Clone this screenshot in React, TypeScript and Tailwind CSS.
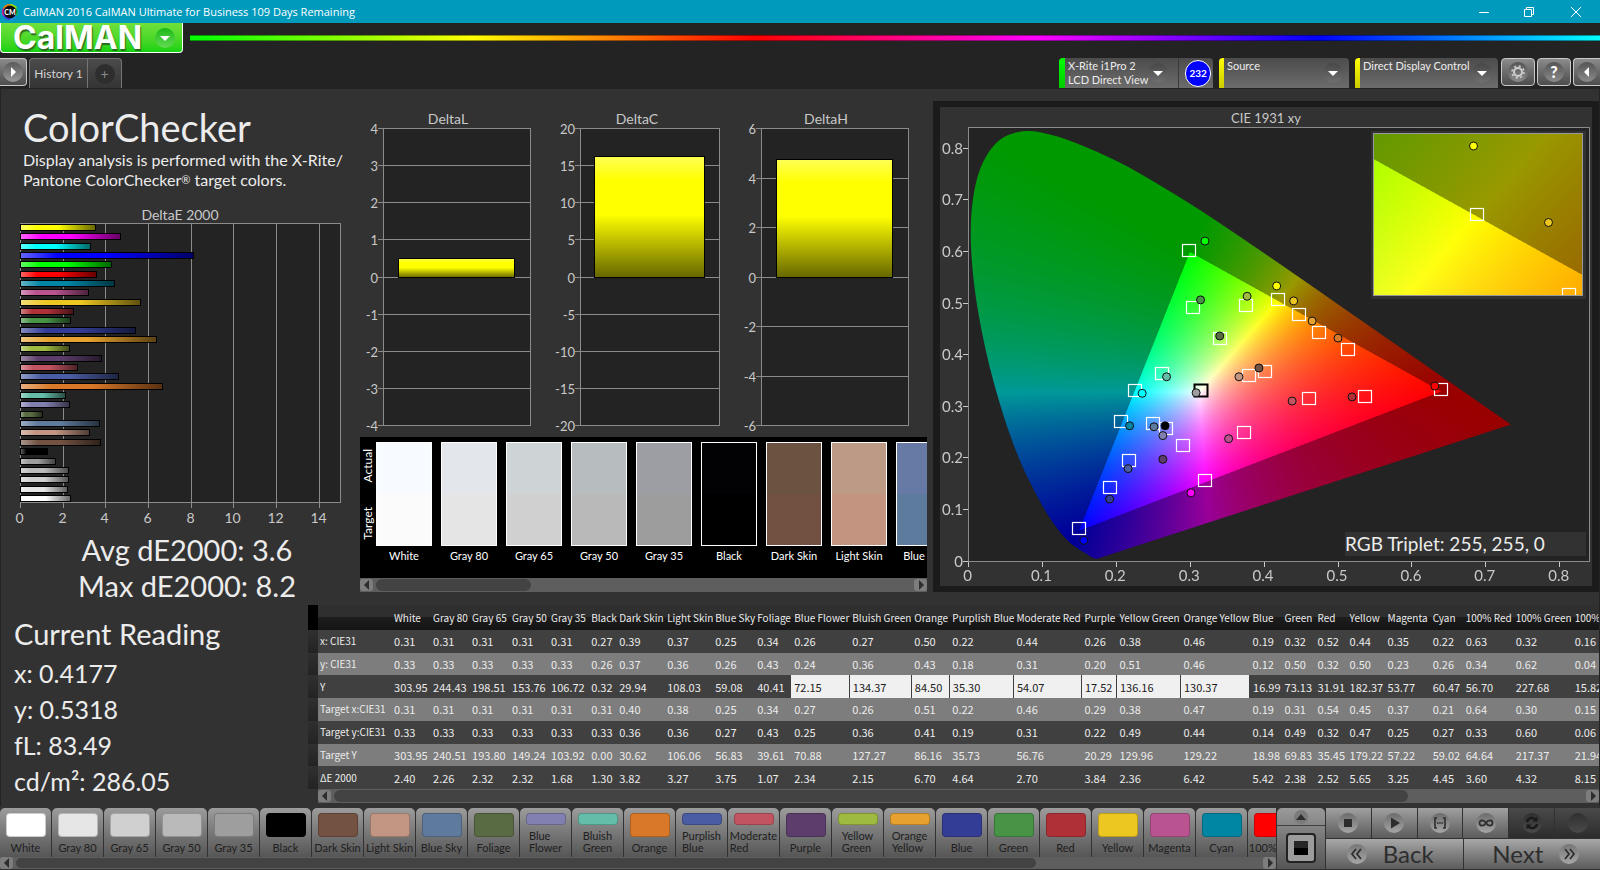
import React, { useLayoutEffect, useRef } from 'react';

interface Patch {
  name: string;
  color: string;
  deltaE: number;
}

const patches: Patch[] = [
  { name: 'White', color: '#ffffff', deltaE: 2.4 },
  { name: 'Gray 80', color: '#e6e6e6', deltaE: 2.26 },
  { name: 'Gray 65', color: '#d0d0d0', deltaE: 2.32 },
  { name: 'Gray 50', color: '#bababa', deltaE: 2.32 },
  { name: 'Gray 35', color: '#9e9e9e', deltaE: 1.68 },
  { name: 'Black', color: '#000000', deltaE: 1.3 },
  { name: 'Dark Skin', color: '#735242', deltaE: 3.82 },
  { name: 'Light Skin', color: '#c29682', deltaE: 3.27 },
  { name: 'Blue Sky', color: '#5e7a9c', deltaE: 3.75 },
  { name: 'Foliage', color: '#596b42', deltaE: 1.07 },
  { name: 'Blue Flower', color: '#8280b0', deltaE: 2.34 },
  { name: 'Bluish Green', color: '#63bda8', deltaE: 2.15 },
  { name: 'Orange', color: '#d97829', deltaE: 6.7 },
  { name: 'Purplish Blue', color: '#4a5ca3', deltaE: 4.64 },
  { name: 'Moderate Red', color: '#c25461', deltaE: 2.7 },
  { name: 'Purple', color: '#5c3d6b', deltaE: 3.84 },
  { name: 'Yellow Green', color: '#9eba40', deltaE: 2.36 },
  { name: 'Orange Yellow', color: '#e6a12e', deltaE: 6.42 },
  { name: 'Blue', color: '#333d96', deltaE: 5.42 },
  { name: 'Green', color: '#479447', deltaE: 2.38 },
  { name: 'Red', color: '#b03038', deltaE: 2.52 },
  { name: 'Yellow', color: '#edc721', deltaE: 5.65 },
  { name: 'Magenta', color: '#ba5491', deltaE: 3.25 },
  { name: 'Cyan', color: '#0085a3', deltaE: 4.45 },
  { name: '100% Red', color: '#ff0000', deltaE: 3.6 },
  { name: '100% Green', color: '#00ff00', deltaE: 4.32 },
  { name: '100% Blue', color: '#0000ff', deltaE: 8.15 },
  { name: '100% Cyan', color: '#00ffff', deltaE: 3.35 },
  { name: '100% Magenta', color: '#ff00ff', deltaE: 4.72 },
  { name: '100% Yellow', color: '#ffff00', deltaE: 3.56 },
];

const columnWidths = [
  39, 39, 40, 39, 40, 28, 48, 48, 42, 37, 58, 62, 38, 64, 68, 35, 64, 69, 32, 33, 32, 38, 45, 33, 50, 59, 60,
];

const tableRows: { label: string; values: string }[] = [
  { label: 'x: CIE31', values: '0.31 0.31 0.31 0.31 0.31 0.27 0.39 0.37 0.25 0.34 0.26 0.27 0.50 0.22 0.44 0.26 0.38 0.46 0.19 0.32 0.52 0.44 0.35 0.22 0.63 0.32 0.16' },
  { label: 'y: CIE31', values: '0.33 0.33 0.33 0.33 0.33 0.26 0.37 0.36 0.26 0.43 0.24 0.36 0.43 0.18 0.31 0.20 0.51 0.46 0.12 0.50 0.32 0.50 0.23 0.26 0.34 0.62 0.04' },
  { label: 'Y', values: '303.95 244.43 198.51 153.76 106.72 0.32 29.94 108.03 59.08 40.41 72.15 134.37 84.50 35.30 54.07 17.52 136.16 130.37 16.99 73.13 31.91 182.37 53.77 60.47 56.70 227.68 15.82' },
  { label: 'Target x:CIE31', values: '0.31 0.31 0.31 0.31 0.31 0.31 0.40 0.38 0.25 0.34 0.27 0.26 0.51 0.22 0.46 0.29 0.38 0.47 0.19 0.31 0.54 0.45 0.37 0.21 0.64 0.30 0.15' },
  { label: 'Target y:CIE31', values: '0.33 0.33 0.33 0.33 0.33 0.33 0.36 0.36 0.27 0.43 0.25 0.36 0.41 0.19 0.31 0.22 0.49 0.44 0.14 0.49 0.32 0.47 0.25 0.27 0.33 0.60 0.06' },
  { label: 'Target Y', values: '303.95 240.51 193.80 149.24 103.92 0.00 30.62 106.06 56.83 39.61 70.88 127.27 86.16 35.73 56.76 20.29 129.96 129.22 18.98 69.83 35.45 179.22 57.22 59.02 64.64 217.37 21.94' },
  { label: 'ΔE 2000', values: '2.40 2.26 2.32 2.32 1.68 1.30 3.82 3.27 3.75 1.07 2.34 2.15 6.70 4.64 2.70 3.84 2.36 6.42 5.42 2.38 2.52 5.65 3.25 4.45 3.60 4.32 8.15' },
];

const swatches = [
  { name: 'White', actual: '#f7fbff', target: '#fbfbfb' },
  { name: 'Gray 80', actual: '#e3e7ec', target: '#e5e5e5' },
  { name: 'Gray 65', actual: '#ced3d6', target: '#d0d0d0' },
  { name: 'Gray 50', actual: '#b7bcbf', target: '#b9b9b9' },
  { name: 'Gray 35', actual: '#9d9ea3', target: '#9d9d9d' },
  { name: 'Black', actual: '#020205', target: '#000000' },
  { name: 'Dark Skin', actual: '#6c5240', target: '#725142' },
  { name: 'Light Skin', actual: '#bc9a86', target: '#c39581' },
  { name: 'Blue Sky', actual: '#667aa5', target: '#5d7b9d' },
];

// CIE 1931 spectral locus
const locus: [number, number][] = [
  [0.1741, 0.005], [0.1689, 0.0069], [0.1644, 0.0109], [0.1566, 0.0177], [0.144, 0.0297], [0.1355, 0.0399],
  [0.1241, 0.0578], [0.1096, 0.0868], [0.0913, 0.1327], [0.0687, 0.2007], [0.0454, 0.295], [0.0235, 0.4127],
  [0.0082, 0.5384], [0.0039, 0.6548], [0.0139, 0.7502], [0.0389, 0.812], [0.0743, 0.8338], [0.1142, 0.8262],
  [0.1547, 0.8059], [0.1929, 0.7816], [0.2296, 0.7543], [0.3016, 0.6923], [0.3731, 0.6245], [0.4441, 0.5547],
  [0.5125, 0.4866], [0.5752, 0.4242], [0.627, 0.3725], [0.6658, 0.334], [0.6915, 0.3083], [0.719, 0.2809],
  [0.7347, 0.2653],
];

const targets: [number, number][] = [
  [0.299, 0.602], [0.304, 0.492], [0.375, 0.496], [0.34, 0.431], [0.262, 0.363], [0.225, 0.33], [0.207, 0.271],
  [0.249, 0.267], [0.267, 0.256], [0.29, 0.223], [0.217, 0.194], [0.191, 0.142], [0.149, 0.063], [0.32, 0.156],
  [0.373, 0.249], [0.379, 0.359], [0.419, 0.507], [0.447, 0.477], [0.474, 0.443], [0.513, 0.41], [0.401, 0.368],
  [0.461, 0.315], [0.537, 0.318], [0.64, 0.333],
];

const readings: [number, number, string][] = [
  [0.32, 0.621, '#00ff00'], [0.314, 0.507, '#479447'], [0.377, 0.514, '#9eba40'], [0.34, 0.437, '#596b42'],
  [0.268, 0.358, '#63bda8'], [0.235, 0.326, '#00ffff'], [0.218, 0.263, '#0085a3'], [0.251, 0.261, '#5e7a9c'],
  [0.266, 0.263, '#000000'], [0.263, 0.244, '#8280b0'], [0.263, 0.198, '#5c3d6b'], [0.216, 0.18, '#4a5ca3'],
  [0.191, 0.121, '#333d96'], [0.156, 0.041, '#0000ff'], [0.301, 0.133, '#ff00ff'], [0.352, 0.238, '#ba5491'],
  [0.366, 0.358, '#c29682'], [0.393, 0.375, '#735242'], [0.308, 0.327, '#9e9e9e'], [0.417, 0.534, '#ffff00'],
  [0.44, 0.505, '#edc721'], [0.465, 0.466, '#e6a12e'], [0.5, 0.433, '#d97829'], [0.519, 0.319, '#b03038'],
  [0.438, 0.311, '#c25461'], [0.631, 0.34, '#ff0000'],
];

const SCALE_X = 739;
const SCALE_Y = 516;

export default function App() {
  return (
    <div className="min-h-screen flex flex-col overflow-hidden bg-[#232323] text-[#ececec] font-[Lato,sans-serif] select-none">
      <TitleBar />
      <Header />
      <main className="flex-1 flex flex-col bg-[#323232] mx-px">
        <div className="grid grid-cols-[350fr_580fr_668fr]">
          <section className="min-w-0 pt-[18px] pb-px">
            <h1 className="pl-[22px] text-[38px] leading-[40px]">ColorChecker</h1>
            <p className="pl-[22px] mt-[3px] text-[16px] leading-5 whitespace-nowrap">
              Display analysis is performed with the X-Rite/
              <br />
              Pantone ColorChecker<span className="text-[11px] align-top">®</span> target colors.
            </p>
            <DeltaEChart />
            <div className="pl-[22px] text-[29px] leading-9 text-center">
              <p>Avg dE2000: 3.6</p>
              <p>Max dE2000: 8.2</p>
            </div>
          </section>

          <section className="min-w-0 pl-[9px] pr-1 pt-[21px]">
            <div className="grid grid-cols-3 gap-[13px] pr-[13px]">
              <DeltaChart title="DeltaL" max={4} step={1} value={0.5} gutter={23} />
              <DeltaChart title="DeltaC" max={20} step={5} value={16.2} gutter={31} />
              <DeltaChart title="DeltaH" max={6} step={2} value={4.75} gutter={23} />
            </div>
            <SwatchStrip />
          </section>

          <section className="min-w-0 pt-3 pl-[2px]">
            <div className="bg-[#1b1b1b] py-[6px] px-[7px]">
              <div className="bg-[#323232]">
                <CieChart />
              </div>
            </div>
          </section>
        </div>

        <div className="flex-1 flex">
          <section className="w-[307px] shrink-0 pl-[13px] pt-[11px]">
            <h2 className="text-[29px] leading-9">Current Reading</h2>
            <div className="mt-[3px] text-[25px] leading-9">
              <p>x: 0.4177</p>
              <p>y: 0.5318</p>
              <p>fL: 83.49</p>
              <p>cd/m²: 286.05</p>
            </div>
          </section>
          <ReadingTable />
        </div>
      </main>
      <BottomBar />
    </div>
  );
}

function TitleBar() {
  return (
    <div className="h-[23px] flex items-center bg-[#009abd] text-white">
      <svg className="w-4 h-4 ml-[2px]" viewBox="0 0 16 16">
        <path d="M8 8L8 0A8 8 0 0 1 15 4Z" fill="#a0e000" />
        <path d="M8 8L15 4A8 8 0 0 1 15 12Z" fill="#00c060" />
        <path d="M8 8L15 12A8 8 0 0 1 8 16Z" fill="#2090f0" />
        <path d="M8 8L8 16A8 8 0 0 1 1 12Z" fill="#4040e0" />
        <path d="M8 8L1 12A8 8 0 0 1 1 4Z" fill="#d020a0" />
        <path d="M8 8L1 4A8 8 0 0 1 8 0Z" fill="#f08000" />
        <circle cx="8" cy="8" r="6.5" fill="#0b0b14" />
        <text x="8" y="10.5" textAnchor="middle" fontSize="7" fontWeight="900" fill="#fff">CM</text>
      </svg>
      <span className="ml-[5px] text-[11px] leading-4 font-['Open_Sans',sans-serif]">
        CalMAN 2016 CalMAN Ultimate for Business 109 Days Remaining
      </span>
      <div className="ml-auto flex">
        <button aria-label="Minimize" className="w-[45px] h-[23px] flex items-center justify-center">
          <svg className="w-[10px] h-[10px]" viewBox="0 0 10 10" stroke="#fff"><path d="M0 5.5H10" /></svg>
        </button>
        <button aria-label="Restore" className="w-[45px] h-[23px] flex items-center justify-center">
          <svg className="w-[10px] h-[10px]" viewBox="0 0 10 10" stroke="#fff" fill="none">
            <path d="M.5 2.5H7.5V9.5H.5ZM2.5 2.5V.5H9.5V7.5H7.5" />
          </svg>
        </button>
        <button aria-label="Close" className="w-[49px] h-[23px] flex items-center justify-center">
          <svg className="w-[10px] h-[10px]" viewBox="0 0 10 10" stroke="#fff"><path d="M0 0L10 10M10 0L0 10" /></svg>
        </button>
      </div>
    </div>
  );
}

function Header() {
  return (
    <header>
      <div className="h-[35px] flex items-start">
        <button className="w-[183px] h-[30px] flex items-center justify-between pl-3 pr-[7px] rounded-b-[4px] border border-t-0 border-white bg-linear-to-b from-[#6fe03c] to-[#0fd210] text-white">
          <span className="text-[32px] leading-[28px] font-bold font-[Inter,sans-serif] [text-shadow:1px_2px_1px_#2a6a20]">CalMAN</span>
          <span className="w-5 h-5 rounded-full flex items-center justify-center bg-linear-to-b from-[#14b814] to-[#5fdc50]">
            <Triangle direction="down" />
          </span>
        </button>
        <div className="flex-1 h-[6px] mt-3 ml-[7px] border-y border-black/40 bg-[linear-gradient(to_right,#0f0,#ff0,#f00,#f0f,#00f,#0ff)]" />
      </div>

      <div className="h-[31px] flex items-start">
        <button aria-label="Open panel" className="w-[27px] h-7 flex items-center justify-center rounded-r-[4px] border border-l-0 border-[#c9c9c9] bg-linear-to-b from-[#8b8b8b] to-[#4d4d4d]">
          <span className="w-5 h-5 rounded-full flex items-center justify-center bg-linear-to-b from-[#5a5a5a] to-[#9b9b9b]">
            <Triangle direction="right" />
          </span>
        </button>
        <div className="ml-[2px] flex h-[30px] rounded-t-[4px] border border-b-0 border-[#757575] bg-linear-to-b from-[#4b4b4b] to-[#343434]">
          <button className="w-[58px] text-[12px] text-[#d4d4d4] border-r border-[#757575]">History 1</button>
          <button aria-label="Add history" className="w-[33px] flex items-center justify-center">
            <span className="w-5 h-5 rounded-full bg-[#2e2e2e] text-[#8a8a8a] text-[14px] leading-5">+</span>
          </button>
        </div>

        <div className="ml-auto flex items-start">
          <div className="flex h-[30px] w-[154px] mr-[6px] rounded-t-[4px] overflow-hidden bg-linear-to-b from-[#4c4c4c] to-[#6c6c6c]">
            <button className="flex-1 flex pr-1 border-r border-[#3a3a3a] text-left">
              <span className="w-[6px] self-stretch bg-linear-to-b from-[#00ff00] to-[#00cc00]" />
              <span className="pl-[3px] flex-1 text-[11px] leading-[14px] pt-px whitespace-nowrap">
                X-Rite i1Pro 2
                <br />
                LCD Direct View
              </span>
              <DropCircle />
            </button>
            <span className="w-[27px] h-[27px] ml-[6px] mr-[2px] mt-[2px] flex items-center justify-center rounded-full border border-white bg-[#0000ff] text-white text-[10px] font-bold">232</span>
          </div>
          <button className="flex h-[30px] w-[130px] mr-[6px] rounded-t-[4px] overflow-hidden text-left bg-linear-to-b from-[#4c4c4c] to-[#6c6c6c]">
            <span className="w-[5px] self-stretch bg-linear-to-b from-[#ffff00] to-[#cccc00]" />
            <span className="pl-[3px] flex-1 text-[11px] leading-[14px] pt-px">Source</span>
            <DropCircle />
          </button>
          <button className="flex h-[30px] w-[143px] mr-[3px] rounded-t-[4px] overflow-hidden text-left bg-linear-to-b from-[#4c4c4c] to-[#6c6c6c]">
            <span className="w-[5px] self-stretch bg-linear-to-b from-[#ffff00] to-[#cccc00]" />
            <span className="pl-[3px] flex-1 text-[11px] leading-[14px] pt-px whitespace-nowrap">Direct Display Control</span>
            <DropCircle />
          </button>
          <HeaderButton label="Settings">
            <svg className="w-[14px] h-[14px]" viewBox="0 0 14 14" fill="none" stroke="#d0d0d0">
              <circle cx="7" cy="7" r="4" strokeWidth="2" />
              <circle cx="7" cy="7" r="6" strokeWidth="1.5" strokeDasharray="2.2 2.51" />
            </svg>
          </HeaderButton>
          <HeaderButton label="Help">
            <span className="text-[16px] leading-5 font-black text-white">?</span>
          </HeaderButton>
          <button aria-label="Collapse" className="w-[27px] h-7 flex items-center justify-center rounded-l-[4px] border border-r-0 border-[#c9c9c9] bg-linear-to-b from-[#8b8b8b] to-[#4d4d4d]">
            <span className="w-5 h-5 rounded-full flex items-center justify-center bg-linear-to-b from-[#555] to-[#8b8b8b]">
              <Triangle direction="left" />
            </span>
          </button>
        </div>
      </div>
    </header>
  );
}

function HeaderButton({ label, children }: { label: string; children: React.ReactNode }) {
  return (
    <button aria-label={label} className="w-[34px] h-7 mr-[2px] flex items-center justify-center rounded-[4px] border border-[#c9c9c9] bg-linear-to-b from-[#8b8b8b] to-[#4d4d4d]">
      <span className="w-5 h-5 rounded-full flex items-center justify-center bg-linear-to-b from-[#555] to-[#8b8b8b]">{children}</span>
    </button>
  );
}

function DropCircle() {
  return (
    <span className="w-5 h-5 mt-[5px] mr-[6px] shrink-0 rounded-full flex items-center justify-center bg-linear-to-b from-[#474747] to-[#707070]">
      <Triangle direction="down" />
    </span>
  );
}

function Triangle({ direction, dark }: { direction: 'up' | 'down' | 'left' | 'right'; dark?: boolean }) {
  const points = {
    up: '0,8 5,2 10,8',
    down: '0,3 10,3 5,8',
    left: '7,0 7,10 2,5',
    right: '3,0 3,10 8,5',
  };
  return (
    <svg className="w-[10px] h-[10px]" viewBox="0 0 10 10">
      <polygon points={points[direction]} fill={dark ? '#2d2d2d' : '#ffffff'} />
    </svg>
  );
}

function DeltaEChart() {
  const bars = [...patches].reverse();
  const unit = 320 / 15;
  return (
    <svg className="block w-full mt-3" viewBox="0 0 350 330" fontSize="14" fill="#c9c9c9">
      <defs>
        <linearGradient id="shadeX">
          <stop offset="0" stopColor="#fff" stopOpacity=".4" />
          <stop offset=".22" stopColor="#fff" stopOpacity="0" />
          <stop offset=".5" stopColor="#000" stopOpacity="0" />
          <stop offset="1" stopColor="#000" stopOpacity=".6" />
        </linearGradient>
      </defs>
      <text x="179" y="18" textAnchor="middle">DeltaE 2000</text>
      <rect x="19.5" y="21.5" width="320" height="279" fill="#232323" stroke="#8b8b8b" />
      {[0, 2, 4, 6, 8, 10, 12, 14].map((tick) => {
        const x = Math.round(19 + tick * unit) + 0.5;
        return (
          <g key={tick}>
            <path d={`M${x} 21V306`} stroke="#8b8b8b" />
            <text x={x - 1} y="321" textAnchor="middle">{tick}</text>
          </g>
        );
      })}
      {bars.map((bar, i) => {
        const y = Math.round(22 + i * 9.34) + 0.5;
        const width = Math.round(bar.deltaE * unit) - 1;
        return (
          <g key={bar.name}>
            <rect x="19.5" y={y} width={width} height="6" fill={bar.color} />
            <rect x="19.5" y={y} width={width} height="6" fill="url(#shadeX)" stroke="#000" />
          </g>
        );
      })}
    </svg>
  );
}

interface DeltaChartProps {
  title: string;
  max: number;
  step: number;
  value: number;
  gutter: number;
}

function DeltaChart({ title, max, step, value, gutter }: DeltaChartProps) {
  const top = 18.5;
  const height = 297;
  const width = 170 - gutter;
  const toY = (v: number) => Math.floor(top + ((max - v) / (2 * max)) * height) + 0.5;
  const ticks: number[] = [];
  for (let t = max; t >= -max; t -= step) ticks.push(t);
  const gradient = `shade${title}`;
  return (
    <svg className="block w-full" viewBox="0 0 176 327" fontSize="13" fill="#c9c9c9">
      <defs>
        <linearGradient id={gradient} x2="0" y2="1">
          <stop offset="0" stopColor="#ffff55" />
          <stop offset=".2" stopColor="#ffff00" />
          <stop offset=".48" stopColor="#ffff00" />
          <stop offset="1" stopColor="#666600" />
        </linearGradient>
      </defs>
      <text x="88" y="14" fontSize="14" textAnchor="middle">{title}</text>
      <rect x={gutter + 0.5} y={top} width={width} height={height} fill="#232323" stroke="#8b8b8b" />
      {ticks.map((tick) => (
        <g key={tick}>
          <path d={`M${gutter - 5} ${toY(tick)}H${gutter + width}`} stroke="#8b8b8b" />
          <text x={gutter - 5} y={toY(tick) + 5} textAnchor="end">{tick}</text>
        </g>
      ))}
      <rect
        x={Math.round(gutter + width * 0.1) + 0.5}
        y={toY(value)}
        width={Math.round(width * 0.79)}
        height={toY(0) - toY(value)}
        fill={`url(#${gradient})`}
        stroke="#000"
      />
    </svg>
  );
}

function SwatchStrip() {
  return (
    <div>
      <div className="h-[141px] flex overflow-hidden bg-black text-white">
        <div className="w-4 shrink-0 h-[109px] pt-3 pb-[6px] flex flex-col justify-between items-center text-[12px] leading-4">
          <span className="[writing-mode:vertical-rl] rotate-180">Actual</span>
          <span className="[writing-mode:vertical-rl] rotate-180">Target</span>
        </div>
        {swatches.map((swatch) => (
          <div key={swatch.name} className="w-14 mr-[9px] pt-[5px] shrink-0">
            <div className="h-[104px] flex flex-col border border-white">
              <div className="flex-1" style={{ backgroundColor: swatch.actual }} />
              <div className="flex-1" style={{ backgroundColor: swatch.target }} />
            </div>
            <p className="text-[11px] leading-5 text-center whitespace-nowrap">{swatch.name}</p>
          </div>
        ))}
      </div>
      <ScrollBar thumb="w-[29%]" />
    </div>
  );
}

function ScrollBar({ thumb, thin }: { thumb: string; thin?: boolean }) {
  return (
    <div className={`flex items-center bg-[#5e5e5e] ${thin ? 'h-3' : 'h-[14px]'}`}>
      <button aria-label="Scroll left" className="w-[13px] h-3 shrink-0 flex items-center justify-center rounded-[3px] bg-[#7d7d7d]">
        <Triangle direction="left" dark />
      </button>
      <div className="flex-1 mx-[3px] self-stretch py-px">
        <div className={`h-full rounded-full bg-[#434343] ${thumb}`} />
      </div>
      <button aria-label="Scroll right" className="w-[13px] h-3 shrink-0 flex items-center justify-center rounded-[3px] bg-[#7d7d7d]">
        <Triangle direction="right" dark />
      </button>
    </div>
  );
}

interface GamutProps {
  width: number;
  height: number;
  left: number;
  top: number;
  zoom: number;
}

// Fills the horseshoe with chromaticity colours, dimmed outside the sRGB triangle
function GamutCanvas({ width, height, left, top, zoom }: GamutProps) {
  const ref = useRef<HTMLCanvasElement>(null);
  // twice the display size, so that the triangle's edges come out smooth
  const w = width * 2;
  const h = height * 2;

  useLayoutEffect(() => {
    const ctx = ref.current?.getContext('2d');
    if (!ctx) return;
    const sx = SCALE_X * zoom * 2;
    const sy = SCALE_Y * zoom * 2;
    const image = ctx.createImageData(w, h);
    for (let py = 0; py < h; py++) {
      for (let px = 0; px < w; px++) {
        const x = left + px / sx;
        const y = Math.max(top - py / sy, 0.0001);
        const X = x / y;
        const Z = (1 - x - y) / y;
        const r = 3.2406 * X - 1.5372 - 0.4986 * Z;
        const g = -0.9689 * X + 1.8758 + 0.0415 * Z;
        const b = 0.0557 * X - 0.204 + 1.057 * Z;
        const inside = r >= 0 && g >= 0 && b >= 0;
        const k = (inside ? 255 : 153) / Math.max(r, g, b);
        const i = (py * w + px) * 4;
        image.data[i] = Math.max(r, 0) * k;
        image.data[i + 1] = Math.max(g, 0) * k;
        image.data[i + 2] = Math.max(b, 0) * k;
        image.data[i + 3] = 255;
      }
    }
    ctx.putImageData(image, 0, 0);

    const pts = locus.map(([x, y]) => [(x - left) * sx, (top - y) * sy]);
    ctx.globalCompositeOperation = 'destination-in';
    ctx.beginPath();
    ctx.moveTo(pts[0][0], pts[0][1]);
    for (let i = 1; i < pts.length - 1; i++) {
      const a = pts[i - 1];
      const p = pts[i];
      const q = pts[i + 1];
      const n = pts[Math.min(i + 2, pts.length - 1)];
      if (i === 1) ctx.lineTo(p[0], p[1]);
      ctx.bezierCurveTo(
        p[0] + (q[0] - a[0]) / 6, p[1] + (q[1] - a[1]) / 6,
        q[0] - (n[0] - p[0]) / 6, q[1] - (n[1] - p[1]) / 6,
        q[0], q[1],
      );
    }
    ctx.closePath();
    ctx.fill();
    ctx.globalCompositeOperation = 'source-over';
  }, [w, h, left, top, zoom]);

  return <canvas ref={ref} width={w} height={h} className="block w-full h-full" />;
}

function Target({ x, y, color = '#ffffff' }: { x: number; y: number; color?: string }) {
  return (
    <rect
      x={Math.round(x) - 6.5}
      y={Math.round(y) - 6.5}
      width="13"
      height="12"
      fill="none"
      stroke={color}
      strokeWidth={color === '#ffffff' ? 1.2 : 2}
    />
  );
}

function Reading({ x, y, color }: { x: number; y: number; color: string }) {
  return <circle cx={x} cy={y} r="4" fill={color} stroke="#101010" />;
}

function CieChart() {
  const toX = (x: number) => 28.5 + x * SCALE_X;
  const toY = (y: number) => 454.5 - y * SCALE_Y;
  return (
    <svg className="block w-full" viewBox="0 0 652 479" fontSize="15" fill="#c9c9c9">
      <text x="326" y="16" fontSize="13" textAnchor="middle">CIE 1931 xy</text>
      <rect x="28.5" y="20.5" width="621" height="434" fill="#232323" stroke="#8b8b8b" />
      <foreignObject x="28" y="21" width="621" height="433">
        <GamutCanvas width={621} height={433} left={0} top={0.84} zoom={1} />
      </foreignObject>
      {[0, 0.1, 0.2, 0.3, 0.4, 0.5, 0.6, 0.7, 0.8].map((tick) => (
        <g key={tick}>
          <path d={`M${Math.floor(toX(tick)) + 0.5} 455V460M23 ${Math.round(toY(tick)) - 0.5}H28`} stroke="#c9c9c9" />
          <text x={toX(tick) - 1} y="474" textAnchor="middle">{tick}</text>
          <text x="23" y={toY(tick) + 5} textAnchor="end">{tick}</text>
        </g>
      ))}
      {targets.map(([x, y]) => (
        <Target key={`${x}-${y}`} x={toX(x)} y={toY(y)} />
      ))}
      <Target x={toX(0.314)} y={toY(0.33)} color="#000000" />
      {readings.map(([x, y, color]) => (
        <Reading key={`${x}-${y}`} x={toX(x)} y={toY(y)} color={color} />
      ))}

      {/* Zoomed view of the current patch */}
      <rect x="431" y="24" width="215" height="168" fill="#323232" />
      <svg x="433" y="26" width="210" height="163" viewBox="0 0 210 163">
        <foreignObject x="0" y="0" width="210" height="163">
          <GamutCanvas width={210} height={163} left={0.3915} top={0.5373} zoom={5} />
        </foreignObject>
        <Target x={104} y={82} />
        <Target x={196} y={162} />
        <Reading x={100.5} y={13} color="#ffff00" />
        <Reading x={175.5} y={89.5} color="#edc721" />
        <rect x=".5" y=".5" width="209" height="162" fill="none" stroke="#999999" />
      </svg>

      <rect x="405" y="425" width="241" height="24" fill="#323232" />
      <text x="405" y="444" fontSize="19" fill="#ececec">RGB Triplet: 255, 255, 0</text>
    </svg>
  );
}

function ReadingTable() {
  return (
    <section className="flex-1 min-w-0">
      <div className="overflow-hidden">
        <table className="table-fixed w-[1324px] h-[184px] border-collapse text-left text-[11px] leading-4 font-['Noto_Sans_CJK_SC',sans-serif] whitespace-nowrap">
          <colgroup>
            <col className="w-[10px]" />
            <col className="w-[73px]" />
            {columnWidths.map((width, i) => (
              <col key={i} style={{ width }} />
            ))}
          </colgroup>
          <thead>
            <tr className="h-[25px] text-[10px] bg-linear-to-b from-[#2f2f2f] from-50% via-[#1d1d1d] via-50% to-[#141414]">
              <th className="bg-black" />
              <th />
              {columnWidths.map((_, i) => (
                <th key={i} className="p-0 pl-[3px] font-normal">{patches[i].name}</th>
              ))}
            </tr>
          </thead>
          <tbody>
            {tableRows.map((row, r) => (
              <tr key={row.label} className={r % 2 ? 'bg-[#7d7d7d]' : 'bg-[#404040]'}>
                <td className="bg-linear-to-b from-[#303030] to-[#232323]" />
                <th scope="row" className="p-0 pl-[2px] text-[10px] font-normal">{row.label}</th>
                {row.values.split(' ').map((value, i) => (
                  <td
                    key={i}
                    className={r === 2 && i >= 10 && i <= 17
                      ? 'p-0 pl-[3px] bg-[#f0f0f0] text-[#202020] border-r border-[#404040]'
                      : 'p-0 pl-[3px]'}
                  >
                    {value}
                  </td>
                ))}
              </tr>
            ))}
          </tbody>
        </table>
      </div>
      <div className="ml-[10px]">
        <ScrollBar thumb="w-[86%]" />
      </div>
    </section>
  );
}

function PatchButton({ patch }: { patch: Patch }) {
  const words = patch.name.split(' ');
  const wrapped = patch.name.length > 10 && !patch.name.startsWith('100%');
  return (
    <button className="w-[51px] h-[49px] shrink-0 mr-px pt-[5px] flex flex-col items-center overflow-hidden rounded-t-[5px] bg-linear-to-b from-[#9c9c9c] to-[#565656] text-[#202020] text-[11px] leading-3">
      <span
        className={`w-10 shrink-0 rounded-[4px] border border-black/20 ${wrapped ? 'h-3' : 'h-6'}`}
        style={{ backgroundColor: patch.color }}
      />
      {wrapped ? (
        <span className="mt-[5px] text-left">{words[0]}<br />{words[1]}</span>
      ) : (
        <span className="mt-[5px] whitespace-nowrap">{patch.name}</span>
      )}
    </button>
  );
}

function BottomBar() {
  return (
    <footer className="flex items-start bg-[#323232] pt-[2px] pb-px">
      <div className="flex-1 min-w-0">
        <div className="flex overflow-hidden">
          {patches.map((patch) => (
            <PatchButton key={patch.name} patch={patch} />
          ))}
        </div>
        <ScrollBar thumb="w-[82%]" thin />
      </div>

      <div className="w-[48px] mx-px h-[61px] flex flex-col rounded-t-[5px] overflow-hidden bg-linear-to-b from-[#9a9a9a] to-[#555]">
        <button aria-label="Expand" className="h-[18px] flex items-center justify-center border-b border-[#404040]">
          <span className="w-[14px] h-[14px] rounded-full flex items-center justify-center bg-[#7a7a7a]"><Triangle direction="up" dark /></span>
        </button>
        <button aria-label="Pattern window" className="flex-1 flex items-center justify-center">
          <span className="w-[30px] h-[30px] flex items-center justify-center rounded-[4px] border-2 border-[#222] bg-[#9c9c9c]">
            <span className="w-[14px] h-[14px] bg-linear-to-b from-[#262626] from-50% to-black to-50%" />
          </span>
        </button>
      </div>

      <div className="w-[274px] flex flex-col gap-px">
        <div className="h-[30px] grid grid-cols-6 gap-px">
          <ToolButton label="Stop"><rect x="6" y="6" width="8" height="8" fill="#2d2d2d" /></ToolButton>
          <ToolButton label="Play"><path d="M7 4.500L16 10L7 15.500Z" fill="#2d2d2d" /></ToolButton>
          <ToolButton label="Read series">
            <path d="M7 5H5V15H7M13 5H15V15H13" fill="none" stroke="#2d2d2d" strokeWidth="1.6" />
            <path d="M7 10H13" stroke="#2d2d2d" strokeWidth="1.6" strokeDasharray="1.5 .7" />
          </ToolButton>
          <ToolButton label="Read continuous">
            <path d="M10 10C8 6.500 3.500 6.500 3.500 10S8 13.500 10 10S16.500 6.500 16.500 10S12 13.500 10 10Z" fill="none" stroke="#2d2d2d" strokeWidth="1.7" />
          </ToolButton>
          <ToolButton label="Refresh" dim>
            <path d="M5 9A5 5 0 0 1 14 7M15 11A5 5 0 0 1 6 13" fill="none" stroke="#1a1a1a" strokeWidth="2.4" />
            <path d="M15.500 3.500V8.500H10.500ZM4.500 16.500V11.500H9.500Z" fill="#1a1a1a" />
          </ToolButton>
          <ToolButton label="Record" dim />
        </div>
        <div className="h-[30px] grid grid-cols-2 gap-px text-[#2d2d2d] text-[24px] leading-[30px]">
          <button className="flex items-center justify-center gap-4 pr-2 bg-linear-to-b from-[#a8a8a8] to-[#5c5c5c]">
            <Chevrons path="M9 5L5 10L9 15M14 5L10 10L14 15" />
            Back
          </button>
          <button className="flex items-center justify-center gap-4 pl-2 bg-linear-to-b from-[#a8a8a8] to-[#5c5c5c]">
            Next
            <Chevrons path="M6 5L10 10L6 15M11 5L15 10L11 15" />
          </button>
        </div>
      </div>
    </footer>
  );
}

function Chevrons({ path }: { path: string }) {
  return (
    <span className="w-5 h-5 rounded-full bg-linear-to-b from-[#777] to-[#a6a6a6]">
      <svg className="w-5 h-5" viewBox="0 0 20 20" fill="none" stroke="#2d2d2d" strokeWidth="1.7"><path d={path} /></svg>
    </span>
  );
}

function ToolButton({ label, dim, children }: { label: string; dim?: boolean; children?: React.ReactNode }) {
  return (
    <button
      aria-label={label}
      className={`flex items-center justify-center bg-linear-to-b ${dim ? 'from-[#4a4a4a] to-[#2c2c2c]' : 'from-[#a0a0a0] to-[#5c5c5c]'}`}
    >
      <span className={`w-5 h-5 rounded-full bg-linear-to-b ${dim ? 'from-[#303030] to-[#4a4a4a]' : 'from-[#6c6c6c] to-[#a6a6a6]'}`}>
        <svg className="w-5 h-5" viewBox="0 0 20 20">{children}</svg>
      </span>
    </button>
  );
}
